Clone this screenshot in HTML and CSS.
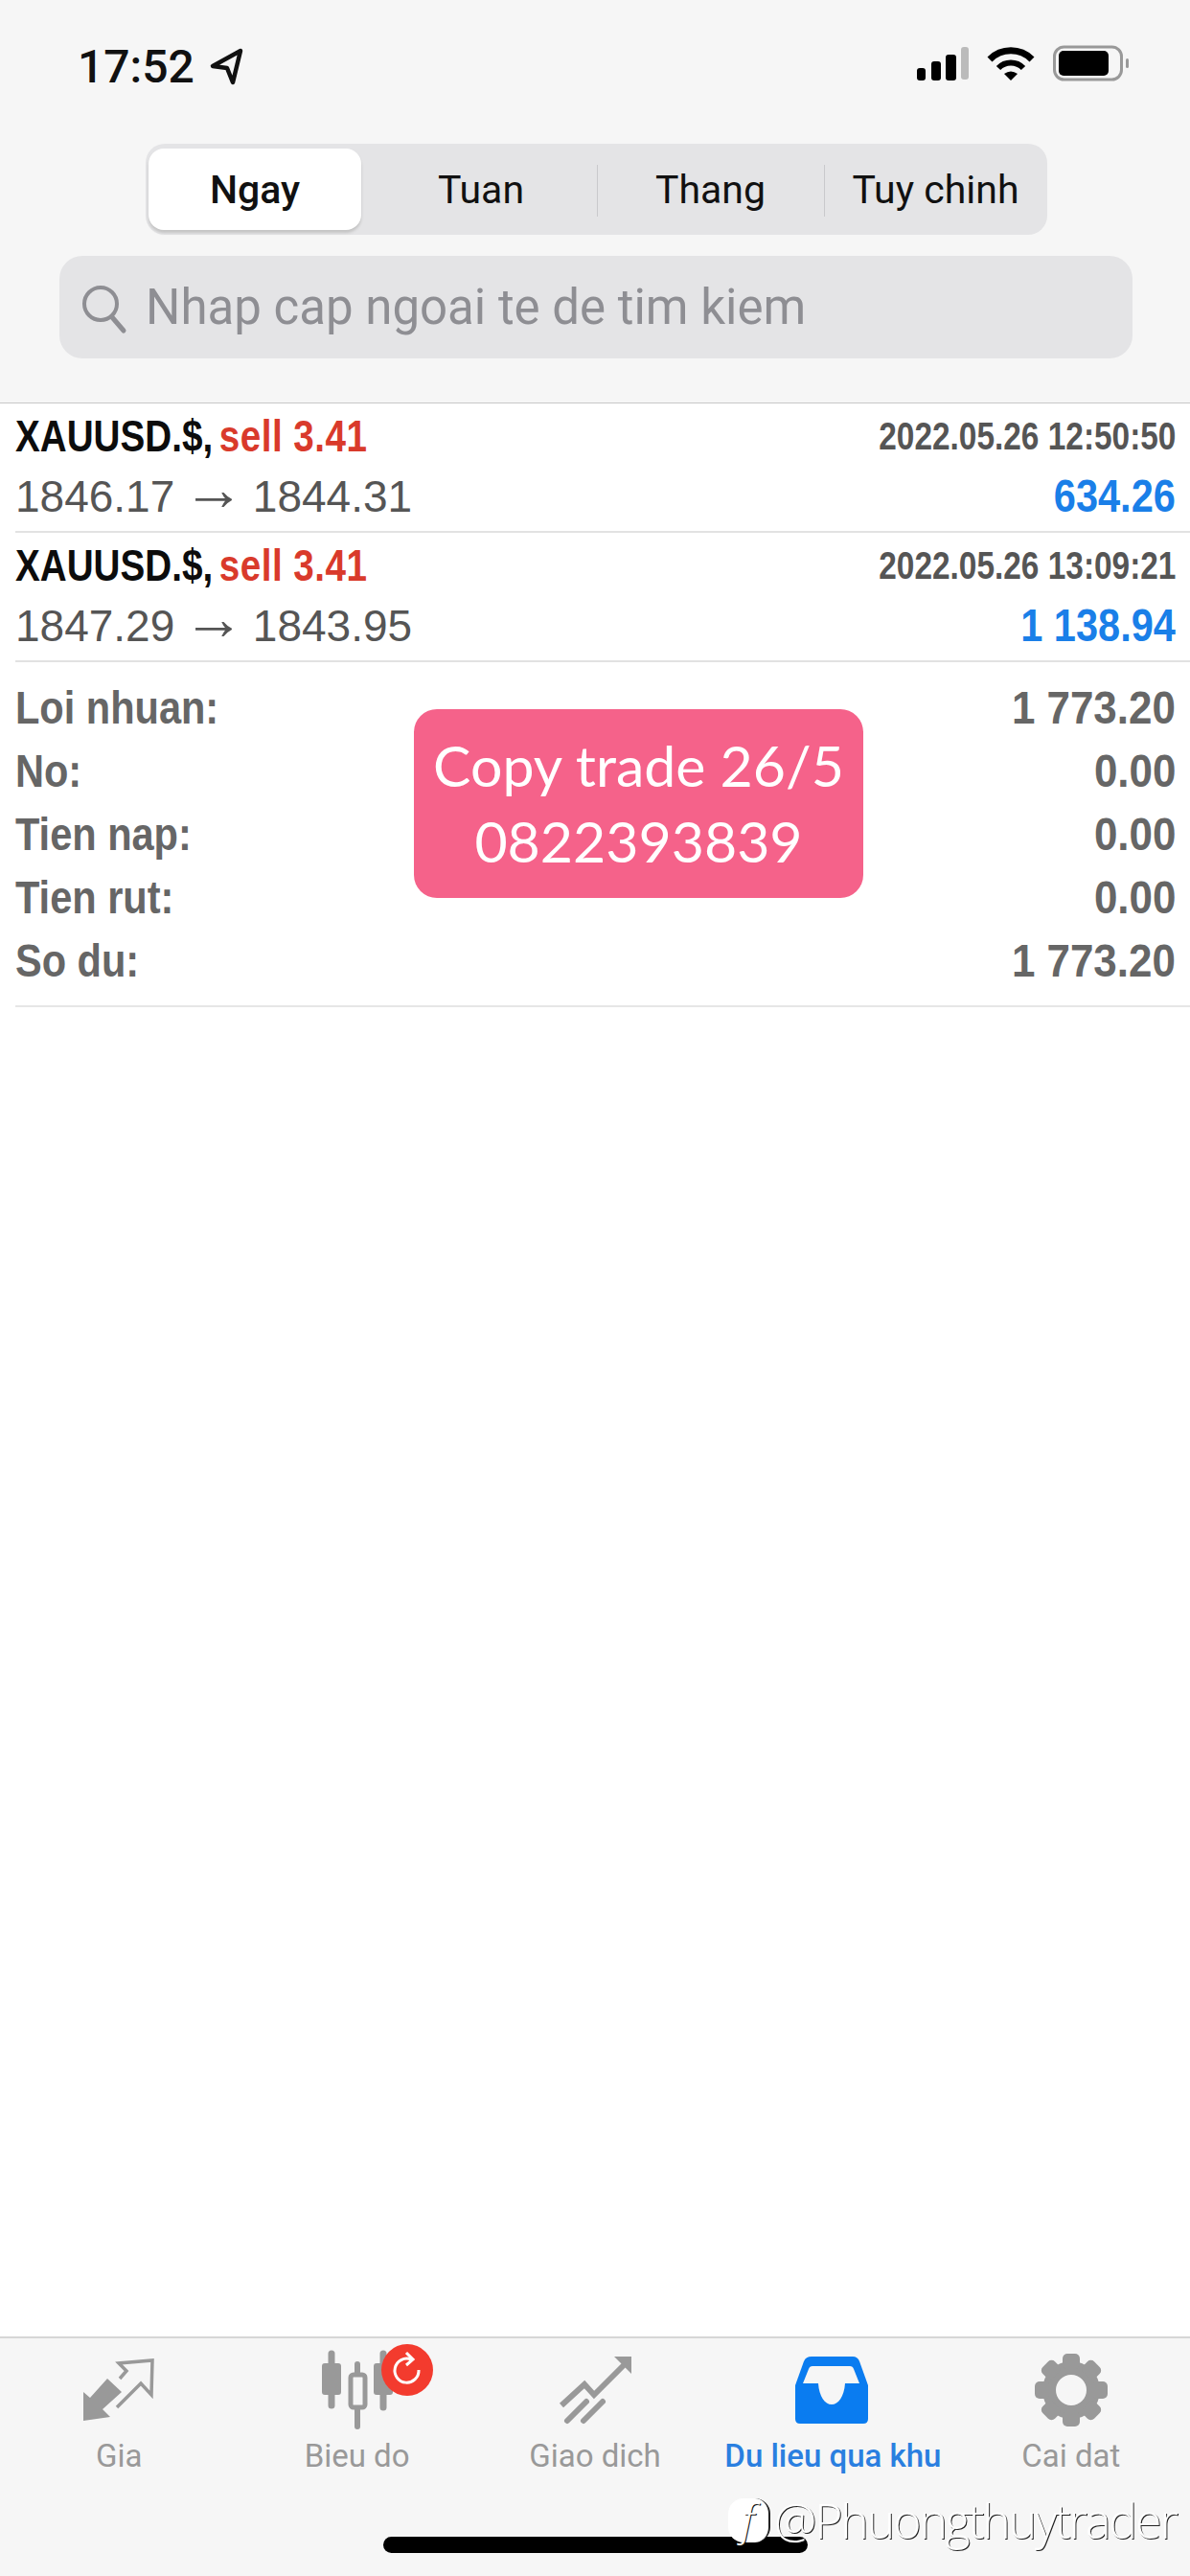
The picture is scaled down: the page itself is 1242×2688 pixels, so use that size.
FILE: index.html
```html
<!DOCTYPE html>
<html>
<head>
<title>Lich su giao dich</title>
<link rel="stylesheet" href="styles.css">
</head>

<body>

<div class="header">
  <div class="statusBar">
    <span class="clock">17:52</span>
    <svg class="locArrow" width="36" height="40" viewBox="0 0 36 40">
      <path d="M33 4 L4 20 L19 22 L25 37 Z" fill="none" stroke="#111" stroke-width="4.5" stroke-linejoin="round"/>
    </svg>
    <svg class="statusIcons" width="235" height="50" viewBox="0 0 235 50">
      <rect x="7" y="27" width="9" height="13" rx="3" fill="#000"/>
      <rect x="22" y="20" width="10" height="20" rx="3" fill="#000"/>
      <rect x="37" y="13" width="11" height="27" rx="3" fill="#000"/>
      <rect x="53" y="5" width="8" height="34" rx="3" fill="#bbb"/>
      <path d="M83 18 A31 31 0 0 1 127 18" fill="none" stroke="#000" stroke-width="7"/>
      <path d="M92 27 A18 18 0 0 1 118 27" fill="none" stroke="#000" stroke-width="6"/>
      <path d="M105 40 L98 33 Q105 28 112 33 Z" fill="#000"/>
      <rect x="150.500" y="5" width="70" height="34" rx="10" fill="none" stroke="#999" stroke-width="3"/>
      <rect x="155" y="9" width="52" height="26" rx="5" fill="#000"/>
      <rect x="225" y="17" width="3" height="10" rx="1.500" fill="#999"/>
    </svg>
  </div>

  <div class="segment">
    <div class="segItem segActive">Ngay</div>
    <div class="segItem segSecond">Tuan</div>
    <div class="segItem segLine">Thang</div>
    <div class="segItem segLine">Tuy chinh</div>
  </div>

  <div class="searchBox">
    <svg width="52" height="56" viewBox="0 0 52 56">
      <circle cx="23" cy="24" r="17" fill="none" stroke="#8e8e93" stroke-width="4"/>
      <line x1="35" y1="38" x2="47" y2="52" stroke="#8e8e93" stroke-width="5" stroke-linecap="round"/>
    </svg>
    <span class="searchText">Nhap cap ngoai te de tim kiem</span>
  </div>
</div>

<div class="content">
  <div class="dealRow">
    <div class="dealLine">
      <span class="symbol">XAUUSD.$, <span class="sell">sell 3.41</span></span>
      <span class="dealDate">2022.05.26 12:50:50</span>
    </div>
    <div class="dealLine">
      <span class="prices">1846.17 <span class="arrow">→</span> 1844.31</span>
      <span class="profit">634.26</span>
    </div>
  </div>
  <div class="dealRow">
    <div class="dealLine">
      <span class="symbol">XAUUSD.$, <span class="sell">sell 3.41</span></span>
      <span class="dealDate">2022.05.26 13:09:21</span>
    </div>
    <div class="dealLine">
      <span class="prices">1847.29 <span class="arrow">→</span> 1843.95</span>
      <span class="profit">1 138.94</span>
    </div>
  </div>

  <div class="summary">
    <div class="sumRow"><span>Loi nhuan:</span><span>1 773.20</span></div>
    <div class="sumRow"><span>No:</span><span>0.00</span></div>
    <div class="sumRow"><span>Tien nap:</span><span>0.00</span></div>
    <div class="sumRow"><span>Tien rut:</span><span>0.00</span></div>
    <div class="sumRow"><span>So du:</span><span>1 773.20</span></div>
  </div>
</div>

<div class="tabBar">
  <div class="tabs">
    <div class="tab">
      <svg width="90" height="90" viewBox="0 0 90 90">
        <path d="M8 77 L8 47 L15 53 L33 33 L48 47 L28 65 L36 73 Z" fill="#999"/>
        <path d="M46 33 L53 25 L45 17 L80 14 L79 50 L68 38 L43 63" fill="none" stroke="#999" stroke-width="3.500"/>
      </svg>
      <span class="tabLabel">Gia</span>
    </div>
    <div class="tab">
      <svg width="130" height="90" viewBox="0 0 130 90">
        <line x1="38" y1="7" x2="38" y2="61" stroke="#999" stroke-width="7" stroke-linecap="round"/>
        <rect x="28" y="17" width="20" height="33" rx="3" fill="#999"/>
        <line x1="65" y1="18" x2="65" y2="83" stroke="#999" stroke-width="6" stroke-linecap="round"/>
        <rect x="58" y="29" width="15" height="34" rx="3" fill="#f6f6f6" stroke="#999" stroke-width="5"/>
        <line x1="92" y1="7" x2="92" y2="63" stroke="#999" stroke-width="7" stroke-linecap="round"/>
        <rect x="82" y="17" width="20" height="33" rx="3" fill="#999"/>
      </svg>
      <span class="tabLabel">Bieu do</span>
      <svg class="badge" width="54" height="54" viewBox="0 0 54 54">
        <circle cx="27" cy="27" r="27" fill="#f33b2e"/>
        <path d="M31 16 A12.500 12.500 0 1 0 39 27" fill="none" stroke="#fff" stroke-width="3"/>
        <path d="M26 9 L33 16 L26 22" fill="none" stroke="#fff" stroke-width="3"/>
      </svg>
    </div>
    <div class="tab">
      <svg width="100" height="90" viewBox="0 0 100 90">
        <path d="M15 61 L39 39 L49 50 L83 16" fill="none" stroke="#999" stroke-width="6"/>
        <path d="M70 10 L88 10 L88 28 Z" fill="#999"/>
        <path d="M21 77 L41 57 M38 77 L58 57" fill="none" stroke="#999" stroke-width="6" stroke-linecap="round"/>
      </svg>
      <span class="tabLabel">Giao dich</span>
    </div>
    <div class="tab">
      <svg width="90" height="90" viewBox="0 0 90 90">
        <path d="M23 10 H66 Q71 10 73 15 L82 40 V75 Q82 80 77 80 H11 Q6 80 6 75 V40 L15 15 Q17 10 23 10 Z" fill="#0a7cf0"/>
        <path d="M14 38 L20 23 Q21 20 24 20 H63 Q66 20 67 23 L73 38 H58 C57 52 51 60 44 60 S31 52 30 38 Z" fill="#f6f6f6"/>
      </svg>
      <span class="tabLabel tabActive">Du lieu qua khu</span>
    </div>
    <div class="tab">
      <svg width="90" height="90" viewBox="0 0 90 90">
        <circle cx="45" cy="45" r="23" fill="none" stroke="#999" stroke-width="14"/>
        <g fill="#999">
          <rect x="36" y="7" width="18" height="16" rx="5"/>
          <rect x="36" y="7" width="18" height="16" rx="5" transform="rotate(45 45 45)"/>
          <rect x="36" y="7" width="18" height="16" rx="5" transform="rotate(90 45 45)"/>
          <rect x="36" y="7" width="18" height="16" rx="5" transform="rotate(135 45 45)"/>
          <rect x="36" y="7" width="18" height="16" rx="5" transform="rotate(180 45 45)"/>
          <rect x="36" y="7" width="18" height="16" rx="5" transform="rotate(225 45 45)"/>
          <rect x="36" y="7" width="18" height="16" rx="5" transform="rotate(270 45 45)"/>
          <rect x="36" y="7" width="18" height="16" rx="5" transform="rotate(315 45 45)"/>
        </g>
      </svg>
      <span class="tabLabel">Cai dat</span>
    </div>
  </div>
  <div class="homeBar"></div>
</div>

<!-- pink sticker and watermark sit on top of the screenshot -->
<div class="sticker">Copy trade 26/5<br>0822393839</div>

<div class="watermark">
  <span class="wmLogo">f</span>
  <span class="wmName">@Phuongthuytrader</span>
</div>

</body>
</html>
```

FILE: styles.css
```css
html, body {
    margin: 0;
    padding: 0;
}
body {
    position: relative;
    width: 1242px;
    height: 2688px;
    display: flex;
    flex-direction: column;
    overflow: hidden;
    background-color: #fff;
    font-family: Roboto, sans-serif;
}

/* top area */
.header {
    height: 420px;
    background-color: #f6f6f6;
    border-bottom: 1px solid #c8c8c8;
}
.statusBar {
    display: flex;
    align-items: center;
    height: 50px;
    padding: 44px 0 0 81px;
}
.clock {
    font: 500 48px Roboto, sans-serif;
    color: #111;
    width: 137px;
}
.statusIcons {
    margin-left: auto;
    margin-right: 57px;
}
.segment {
    display: grid;
    grid-template-columns: 225px 246px 237px 233px;
    width: 941px;
    height: 95px;
    margin: 56px 0 0 152px;
    background-color: #e4e4e6;
    border-radius: 20px;
}
.segItem {
    display: flex;
    align-items: center;
    justify-content: center;
    font: 400 41px Roboto, sans-serif;
    color: #111;
}
.segSecond {
    padding-left: 4px;
}
.segLine {
    position: relative;
}
.segLine::before {
    content: "";
    position: absolute;
    left: 0;
    top: 22px;
    height: 54px;
    width: 1px;
    background-color: #c9c9cc;
}
.segActive {
    margin: 5px 0 5px 3px;
    background-color: #fff;
    border-radius: 16px;
    box-shadow: 0 3px 3px #c4c4c4;
    font-weight: 500;
}
.searchBox {
    display: flex;
    align-items: center;
    width: 1120px;
    height: 107px;
    margin: 22px 0 0 62px;
    background-color: #e4e4e6;
    border-radius: 24px;
    box-sizing: border-box;
    padding-left: 20px;
}
.searchText {
    margin-left: 18px;
    font: 400 51px Roboto, sans-serif;
    color: #8e8e93;
}

/* deal list, the type is narrow and tall so it gets squeezed */
.content {
    flex: 1;
    background-color: #fff;
    padding-left: 16px;
}
.dealRow {
    height: 130px;
    padding-top: 3px;
    border-bottom: 2px solid #e2e2e2;
    padding-right: 15px;
}
.dealLine {
    display: flex;
    justify-content: space-between;
    align-items: center;
    height: 62px;
}
.symbol {
    font: bold 46px "Liberation Sans", Arial, sans-serif;
    color: #0c0c0c;
    transform: scaleX(0.84);
    transform-origin: left center;
}
.sell {
    margin-left: -5px;
    letter-spacing: 0.6px;
    color: #d93a2b;
}
.dealDate {
    font: bold 40px "Liberation Sans", Arial, sans-serif;
    color: #555;
    transform: scaleX(0.835);
    transform-origin: right center;
}
.prices {
    font: 400 46px "Liberation Sans", Arial, sans-serif;
    color: #555;
}
.arrow {
    font-size: 64px;
    line-height: 40px;
    margin: 0 -4px;
    vertical-align: 2px;
}
.profit {
    font: bold 48px "Liberation Sans", Arial, sans-serif;
    color: #1a7fe8;
    transform: scaleX(0.865);
    transform-origin: right center;
}
.summary {
    padding: 14px 15px 14px 0;
    border-bottom: 2px solid #e6e6e6;
}
.sumRow {
    display: flex;
    justify-content: space-between;
    align-items: center;
    height: 66px;
    font: bold 48px "Liberation Sans", Arial, sans-serif;
    color: #666;
}
.sumRow span:first-child {
    transform: scaleX(0.865);
    transform-origin: left center;
}
.sumRow span:last-child {
    transform: scaleX(0.915);
    transform-origin: right center;
}

/* bottom tabs */
.tabBar {
    height: 248px;
    background-color: #f6f6f6;
    border-top: 2px solid #d6d6d6;
}
.tabs {
    display: grid;
    grid-template-columns: repeat(5, 1fr);
    padding-top: 9px;
}
.tab {
    position: relative;
    display: flex;
    flex-direction: column;
    align-items: center;
}
.tabLabel {
    margin-top: 1px;
    font: 400 33px/46px Roboto, sans-serif;
    color: #999;
}
.tabActive {
    font-weight: 500;
    color: #2a7fe0;
}
.badge {
    position: absolute;
    left: 150px;
    top: -3px;
}
.homeBar {
    width: 443px;
    height: 17px;
    margin: 61px auto 0;
    background-color: #000;
    border-radius: 9px;
}

/* overlays */
.sticker {
    position: absolute;
    left: 432px;
    top: 740px;
    width: 469px;
    height: 197px;
    box-sizing: border-box;
    padding-top: 19px;
    background-color: #f5628a;
    border-radius: 24px;
    color: #fff;
    font: 400 59px/79px Lato, sans-serif;
    text-align: center;
}
.watermark {
    position: absolute;
    left: 760px;
    top: 2596px;
    display: flex;
    align-items: center;
    color: #fff;
}
.wmLogo {
    width: 42px;
    height: 46px;
    background-color: #fff;
    border-radius: 16px;
    border-right: 2px solid #222;
    color: #fff;
    text-shadow: 1px 1px 0 #111;
    font: italic 300 44px/44px "Open Sans", sans-serif;
    text-align: center;
}
.wmName {
    margin-left: 4px;
    font: 300 50px "Open Sans", sans-serif;
    letter-spacing: -2.1px;
    text-shadow: 1px 1px 0 #222;
}
```
